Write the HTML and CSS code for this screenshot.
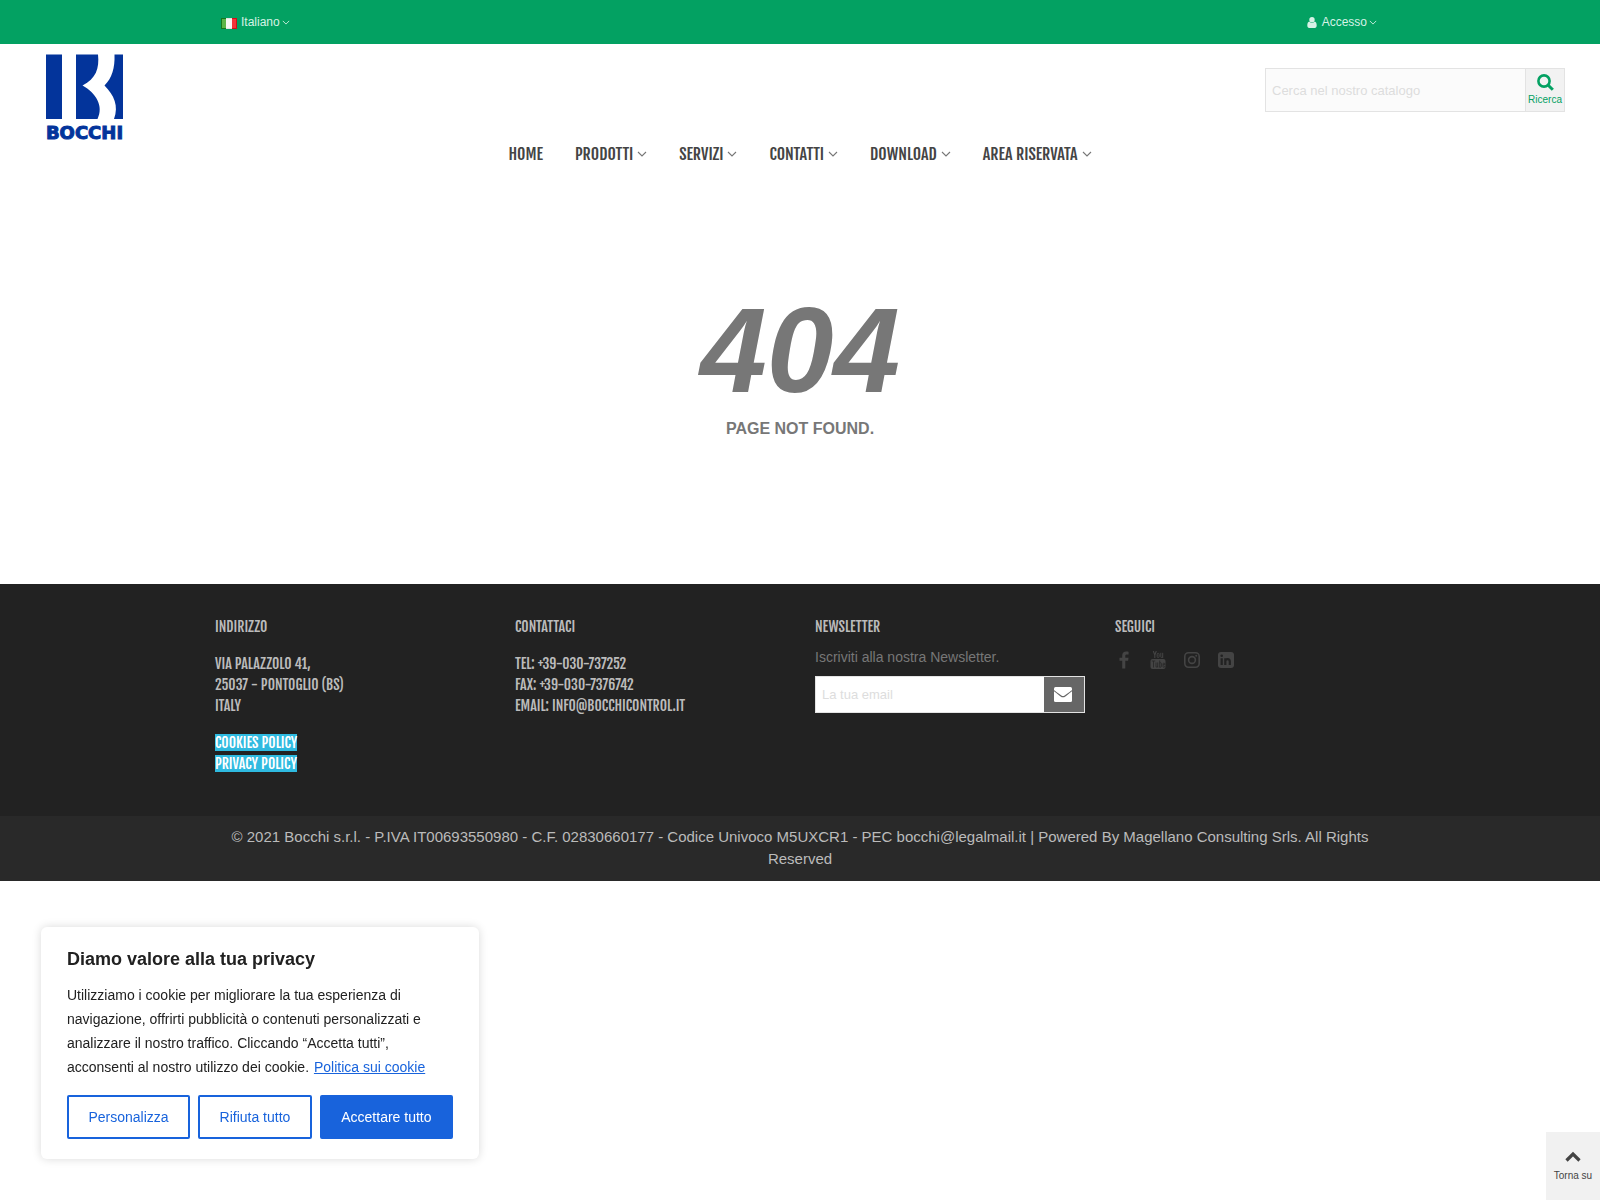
FILE: index.html
```html
<!DOCTYPE html>
<html lang="it">
<head>
<meta charset="utf-8">
<meta name="viewport" content="width=device-width, initial-scale=1">
<title>Bocchi - 404</title>
<link rel="stylesheet" href="styles.css">
</head>
<body>
<svg class="sprite" aria-hidden="true">
  <symbol id="chevron" viewBox="0 0 10 6"><path d="M1 1l4 4 4-4" fill="none" stroke="currentColor" stroke-width="1.1"/></symbol>
</svg>

<div class="topbar">
  <div class="container topbar-row">
    <button class="top-item" type="button">
      <svg class="flag" viewBox="0 0 16 11" aria-hidden="true">
        <rect width="16" height="11" fill="#fff"/>
        <rect width="5" height="11" fill="#14781c"/>
        <rect x="1" y="1" width="4" height="9" fill="#5cb548"/>
        <rect x="5" width="6" height="11" fill="#e2e2e0"/>
        <rect x="5" y="1" width="6" height="9" fill="#f7f7f5"/>
        <rect x="11" width="5" height="11" fill="#d00f18"/>
        <rect x="11" y="1" width="4" height="9" fill="#f5333a"/>
      </svg>
      <span>Italiano</span>
      <svg class="chev-small" aria-hidden="true"><use href="#chevron"/></svg>
    </button>
    <button class="top-item" type="button">
      <svg class="user" viewBox="0 0 10 11" aria-hidden="true"><circle cx="5" cy="2.8" r="2.7" fill="currentColor"/><path d="M2.3 4.6C1 4.8.3 6.3.3 8.500C.3 10.100 1 11 2.200 11h5.600C9 11 9.700 10.100 9.700 8.500C9.700 6.300 9 4.800 7.700 4.600C6.300 6.500 3.700 6.500 2.300 4.600z" fill="currentColor"/></svg>
      <span>Accesso</span>
      <svg class="chev-small" aria-hidden="true"><use href="#chevron"/></svg>
    </button>
  </div>
</div>

<header class="header">
  <div class="header-row">
    <a class="logo" href="#" aria-label="Bocchi">
      <svg viewBox="0 0 100 100" width="100" height="100" aria-hidden="true">
        <g fill="#03349b">
          <rect x="11" y="10.500" width="16" height="64.500"/>
          <path d="M41 10.500h22c1.500 14-2 24-15.500 31C61 49 69 62 62.500 75H41z"/>
          <path d="M79.500 10.500H88V75h-9c5-13 0-24-9.500-33.500C77 34 80 24 79.500 10.500z"/>
        </g>
        <text class="logo-text" x="49.500" y="95" text-anchor="middle">BOCCHI</text>
      </svg>
    </a>
    <form class="search">
      <input class="search-input" type="text" placeholder="Cerca nel nostro catalogo" aria-label="Cerca nel nostro catalogo">
      <button class="search-button" type="button">
        <svg viewBox="0 0 17 17" width="17" height="17" aria-hidden="true"><circle cx="7" cy="7" r="5.600" fill="none" stroke="currentColor" stroke-width="2.600"/><path d="M11 11l4.800 4.800" stroke="currentColor" stroke-width="3"/></svg>
        <span>Ricerca</span>
      </button>
    </form>
  </div>
  <nav class="nav">
    <a href="#">HOME</a>
    <a href="#">PRODOTTI <svg class="chev" aria-hidden="true"><use href="#chevron"/></svg></a>
    <a href="#">SERVIZI <svg class="chev" aria-hidden="true"><use href="#chevron"/></svg></a>
    <a href="#">CONTATTI <svg class="chev" aria-hidden="true"><use href="#chevron"/></svg></a>
    <a href="#">DOWNLOAD <svg class="chev" aria-hidden="true"><use href="#chevron"/></svg></a>
    <a href="#">AREA RISERVATA <svg class="chev" aria-hidden="true"><use href="#chevron"/></svg></a>
  </nav>
</header>

<main class="not-found">
  <h1>404</h1>
  <p>PAGE NOT FOUND.</p>
</main>

<footer>
  <div class="footer-main">
    <div class="container footer-grid">
      <section>
        <h2>INDIRIZZO</h2>
        <p class="block">VIA PALAZZOLO 41,<br>25037 - PONTOGLIO (BS)<br>ITALY</p>
        <p class="block"><a class="policy" href="#">COOKIES POLICY</a><br><a class="policy" href="#">PRIVACY POLICY</a></p>
      </section>
      <section>
        <h2>CONTATTACI</h2>
        <p class="block">TEL: +39-030-737252<br>FAX: +39-030-7376742<br>EMAIL: INFO@BOCCHICONTROL.IT</p>
      </section>
      <section>
        <h2>NEWSLETTER</h2>
        <form class="newsletter">
          <label for="email">Iscriviti alla nostra Newsletter.</label>
          <div class="newsletter-row">
            <input id="email" type="email" placeholder="La tua email">
            <button type="button" aria-label="Iscriviti">
              <svg viewBox="0 0 18 15" width="18" height="15" aria-hidden="true"><rect width="18" height="15" rx="1.500" fill="#fff"/><path d="M0 3.600C3 6 5 7.400 7 8.900c1.500 1.100 2.500 1.100 4 0C13 7.400 15 6 18 3.600" fill="none" stroke="#666" stroke-width="1.200"/></svg>
            </button>
          </div>
        </form>
      </section>
      <section>
        <h2>SEGUICI</h2>
        <div class="social">
          <a href="#" aria-label="Facebook"><svg viewBox="0 0 18 18"><path d="M13.600.7v2.700h-1.800c-1.200 0-1.500.6-1.500 1.400v1.900h3.200l-.4 3h-2.800v7.800H7.200V9.700H4.500v-3h2.700V4.500C7.200 2 8.800.5 11.200.5c1.100 0 2.100.1 2.400.2z" fill="currentColor"/></svg></a>
          <a href="#" aria-label="YouTube"><svg viewBox="0 0 18 18"><path d="M4.300 0l1.500 4v3M7.300 0L5.800 4" fill="none" stroke="currentColor" stroke-width="1.100"/><rect x="8.200" y="2.300" width="1.900" height="4.200" rx=".9" fill="none" stroke="currentColor"/><path d="M11.800 1.800v4c0 1.100 1 .8 1.700 0M13.700 1.800V7" fill="none" stroke="currentColor"/><rect x="1.500" y="8" width="15" height="10" rx="2" fill="currentColor"/><path d="M2.800 10h3.400M4.500 10v6.500M7 11.500v4c0 .9.800.7 1.500 0M8.700 11.500v5M10.700 9.500v7M10.700 12c1.400-.8 1.700 0 1.700 1v2.200c0 1-.7 1.300-1.700.7M15.700 15v.5c0 1.200-1.700 1.200-1.700 0v-2.600c0-1.200 1.700-1.200 1.700 0v.9H14" fill="none" stroke="#222" stroke-width=".7"/></svg></a>
          <a href="#" aria-label="Instagram"><svg viewBox="0 0 18 18"><rect x="1.800" y="1.800" width="14.400" height="14.400" rx="3.600" fill="none" stroke="currentColor" stroke-width="1.600"/><circle cx="9" cy="9" r="3.400" fill="none" stroke="currentColor" stroke-width="1.600"/><circle cx="13.200" cy="4.800" r="1" fill="currentColor"/></svg></a>
          <a href="#" aria-label="LinkedIn"><svg viewBox="0 0 18 18"><rect x="1" y="1" width="16" height="16" rx="3" fill="currentColor"/><path d="M4.700 7.200v6.700M8.300 7.200v6.700M8.300 10.500c0-3.200 4.500-3.200 4.500 0v3.400" fill="none" stroke="#222" stroke-width="2.200"/><circle cx="4.700" cy="4.800" r="1.300" fill="#222"/></svg></a>
        </div>
      </section>
    </div>
  </div>
  <div class="copyright">
    <p class="container">© 2021 Bocchi s.r.l. - P.IVA IT00693550980 - C.F. 02830660177 - Codice Univoco M5UXCR1 - PEC bocchi@legalmail.it | Powered By Magellano Consulting Srls. All Rights Reserved</p>
  </div>
</footer>

<aside class="consent" aria-labelledby="consent-title">
  <h2 id="consent-title">Diamo valore alla tua privacy</h2>
  <p>Utilizziamo i cookie per migliorare la tua esperienza di navigazione, offrirti pubblicità o contenuti personalizzati e analizzare il nostro traffico. Cliccando “Accetta tutti”, acconsenti al nostro utilizzo dei cookie. <a href="#">Politica sui cookie</a></p>
  <div class="consent-actions">
    <button type="button">Personalizza</button>
    <button type="button">Rifiuta tutto</button>
    <button type="button" class="primary">Accettare tutto</button>
  </div>
</aside>

<a class="to-top" href="#">
  <svg viewBox="0 0 16 11" width="16" height="11" aria-hidden="true"><path d="M1.500 9.500L8 3l6.500 6.500" fill="none" stroke="currentColor" stroke-width="3.200"/></svg>
  <span>Torna su</span>
</a>
</body>
</html>
```
FILE: styles.css
```css
* { box-sizing: border-box; }

body {
  margin: 0;
  background: #fff;
  color: #777;
  font-family: Helvetica, "Liberation Sans", Arial, sans-serif;
  font-size: 14px;
  line-height: 21px;
}

h1, h2, p { margin: 0; }
a { color: inherit; text-decoration: none; }
button, input { font: inherit; color: inherit; border-radius: 0; }
button { cursor: pointer; }
input::placeholder { color: #ddd; opacity: 1; }
.sprite { display: none; }

.container {
  width: 100%;
  max-width: 1200px;
  margin: 0 auto;
  padding: 0 15px;
}

/* top bar */
.topbar { background: #03a162; color: #d7f2e6; }
.topbar-row {
  display: flex;
  justify-content: space-between;
  align-items: center;
  height: 44px;
}
.top-item {
  display: flex;
  align-items: center;
  gap: 4px;
  padding: 0 8px 0 6px;
  border: 0;
  background: none;
  font-size: 12px;
}
.flag { width: 16px; height: 11px; margin-top: 2px; }
.user { width: 10px; height: 11px; margin-right: 1px; }
.chev-small { width: 8px; height: 5px; margin-left: -2px; }

/* header */
.header-row {
  display: flex;
  justify-content: space-between;
  align-items: flex-start;
  padding: 0 35px;
}
.logo { display: block; height: 90px; }
.logo-text {
  fill: #03349b;
  font-family: "DejaVu Sans", sans-serif;
  font-size: 18px;
  font-weight: 700;
  stroke: #03349b;
  stroke-width: 1px;
}
.search {
  display: flex;
  width: 300px;
  height: 44px;
  margin-top: 24px;
  border: 1px solid #e3e3e3;
}
.search-input {
  flex: 1;
  min-width: 0;
  padding: 0 6px;
  border: 0;
  background: #fbfbfb;
  font-size: 13px;
}
.search-button {
  display: flex;
  flex-direction: column;
  align-items: center;
  width: 39px;
  padding: 5px 0 0;
  border: 0;
  border-left: 1px solid #e3e3e3;
  background: #f2f2f2;
  color: #03a162;
  font-size: 10px;
  line-height: 18px;
}

.nav {
  display: flex;
  justify-content: center;
  gap: 32px;
  color: #444;
  font-family: "Fjalla One", "Liberation Sans Narrow", sans-serif;
  font-size: 16px;
  line-height: 40px;
}
.nav a { display: flex; align-items: center; gap: 4px; }
.chev { width: 10px; height: 6px; color: #777; }

/* error page */
.not-found { padding: 104px 15px 148px; text-align: center; }
.not-found h1 {
  font-size: 120px;
  font-style: italic;
  font-weight: 700;
  line-height: 144px;
}
.not-found p { font-size: 16px; font-weight: 700; line-height: 14px; }

/* footer */
.footer-main { padding: 32px 0 42px; background: #222; color: #bbb; }
.footer-grid {
  display: grid;
  grid-template-columns: repeat(4, 1fr);
  gap: 30px;
}
.footer-grid h2, .block {
  font-family: "Fjalla One", "Liberation Sans Narrow", sans-serif;
  font-size: 14px;
  font-weight: 400;
  line-height: 21px;
}
.block { margin-top: 16px; }
.policy { background: #2fbae0; color: #fff; }
.newsletter label { display: block; margin: 10px 0 8px; color: #777; }
.newsletter-row {
  display: flex;
  height: 37px;
  border: 1px solid #e3e3e3;
  background: #fff;
}
.newsletter input {
  flex: 1;
  min-width: 0;
  padding: 0 6px;
  border: 0;
  background: #fff;
  font-size: 13px;
}
.newsletter button {
  display: grid;
  place-items: center;
  width: 40px;
  padding: 0 2px 0 0;
  border: 0;
  background: #666;
}
.social { display: flex; gap: 16px; margin-top: 14px; color: #444; }
.social svg { display: block; width: 18px; height: 18px; }

.copyright {
  padding: 10px 0 11px;
  background: #292929;
  color: #bbb;
  font-size: 15px;
  line-height: 22px;
  text-align: center;
}

/* cookie consent */
.consent {
  position: fixed;
  left: 41px;
  bottom: 41px;
  width: 438px;
  padding: 20px 26px;
  border-radius: 6px;
  background: #fff;
  color: #212121;
  box-shadow: 0 0 10px rgba(0, 0, 0, 0.15);
}
.consent h2 { font-size: 18px; line-height: 24px; }
.consent p { margin-top: 12px; line-height: 24px; }
.consent p a { margin-left: 1px; color: #1863dc; text-decoration: underline; }
.consent-actions { display: flex; gap: 8px; margin-top: 16px; }
.consent-actions button {
  flex: 1 1 auto;
  height: 44px;
  padding: 0;
  border: 2px solid #1863dc;
  border-radius: 2px;
  background: #fff;
  color: #1863dc;
}
.consent-actions .primary { background: #1863dc; color: #fff; }

.to-top {
  position: fixed;
  right: 0;
  bottom: 0;
  display: flex;
  flex-direction: column;
  align-items: center;
  width: 54px;
  height: 68px;
  padding-top: 19px;
  background: #f1f1f1;
  color: #444;
  font-size: 10px;
  line-height: 28px;
}
```
